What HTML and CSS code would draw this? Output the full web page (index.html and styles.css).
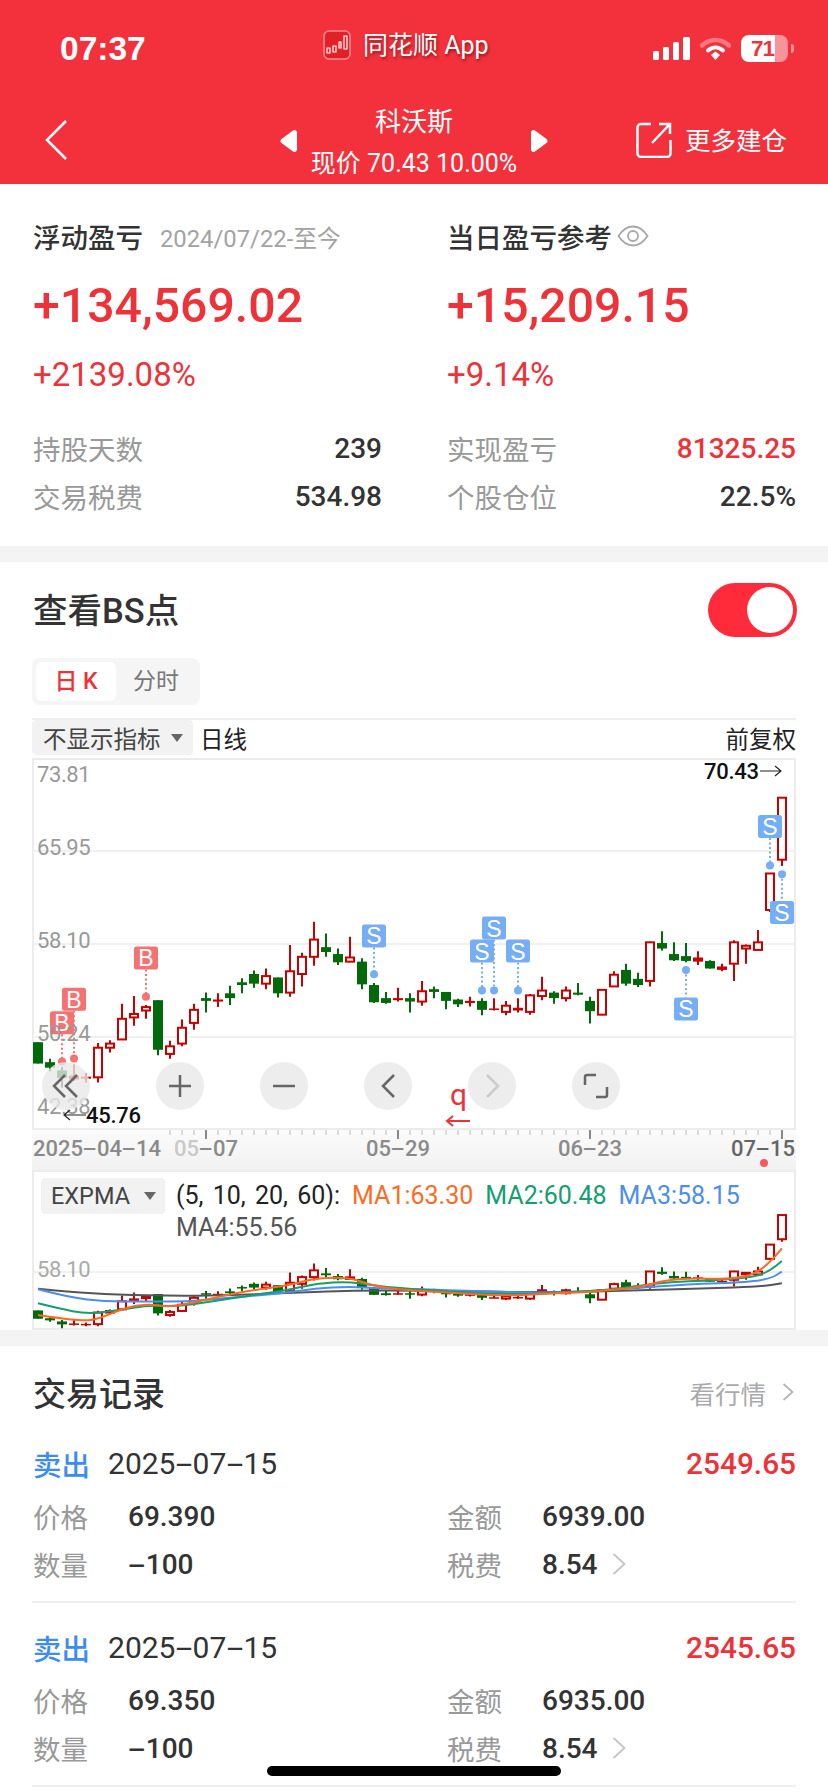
FILE: index.html
```html
<!DOCTYPE html>
<html lang="zh-CN">
<head>
<meta charset="utf-8">
<title>科沃斯 持仓详情</title>
<link rel="stylesheet" href="styles.css">
</head>
<body>
<div class="page">
  <header class="top">
    <div class="status">
      <span class="clock">07:37</span>
      <div class="app-tag">
        <svg class="app-logo" width="28" height="30" viewBox="0 0 28 30">
          <rect x="1" y="1" width="26" height="28" rx="5" fill="#e22028" stroke="#f78d90" stroke-width="1.5"/>
          <path d="M4 18h3v5H4zM10 16h3v6h-3zM16 12h2v6h-2zM21 6h3v13h-3z" fill="none" stroke="#fff" stroke-width="1.2"/>
        </svg>
        <span class="app-name">同花顺 App</span>
      </div>
      <div class="sys">
        <svg width="37" height="23" viewBox="0 0 37 23"><rect x="0" y="14" width="6" height="9" rx="1.5"/><rect x="10" y="10" width="6" height="13" rx="1.5"/><rect x="20" y="5" width="6" height="18" rx="1.5"/><rect x="30" y="0" width="7" height="23" rx="1.5"/></svg>
        <svg class="wifi" width="31" height="23" viewBox="0 0 31 23"><path d="M2 8.500C10 1 21 1 29 8.500" fill="none" stroke="#fff" stroke-opacity=".35" stroke-width="4.500" stroke-linecap="round"/><path d="M8 13.500c4.500-4 10.500-4 15 0" fill="none" stroke="#fff" stroke-width="4" stroke-linecap="round"/><path d="M11 18l4.500-3.500L20 18l-4.500 5z" fill="#fff"/></svg>
        <div class="battery"><span class="battery-fill">71</span><i class="battery-rest"></i><i class="battery-nub"></i></div>
      </div>
    </div>
    <nav class="nav">
      <svg class="back" width="22" height="40" viewBox="0 0 22 40"><path d="M21 1L2 20l19 19" fill="none" stroke="#fff" stroke-width="2.500"/></svg>
      <div class="stock">
        <svg width="17" height="24" viewBox="0 0 17 24"><path d="M13 1.500L1.500 10a2.500 2.500 0 0 0 0 4L13 22.500a2.500 2.500 0 0 0 4-2V3.500a2.500 2.500 0 0 0-4-2z" fill="#fff"/></svg>
        <div class="stock-text">
          <div class="stock-name">科沃斯</div>
          <div class="stock-price">现价 70.43 10.00%</div>
        </div>
        <svg width="17" height="24" viewBox="0 0 17 24"><path d="M4 1.500L15.500 10a2.500 2.500 0 0 1 0 4L4 22.500a2.500 2.500 0 0 1-4-2V3.500a2.500 2.500 0 0 1 4-2z" fill="#fff"/></svg>
      </div>
      <div class="more">
        <svg width="36" height="36" viewBox="0 0 36 36"><path d="M15 2H5a3.500 3.500 0 0 0-3.500 3.500v26A3.500 3.500 0 0 0 5 35h26a3.500 3.500 0 0 0 3.500-3.500V18" fill="none" stroke="#fff" stroke-width="2.500"/><path d="M16 21L33 3M23 2h11v10" fill="none" stroke="#fff" stroke-width="2.500"/></svg>
        <span class="more-text">更多建仓</span>
      </div>
    </nav>
  </header>

  <section class="summary">
    <div class="col">
      <div class="title-line"><span class="label-strong">浮动盈亏</span><span class="since">2024/07/22-至今</span></div>
      <div class="amount">+134,569.02</div>
      <div class="percent">+2139.08%</div>
      <div class="kv first"><span class="k">持股天数</span><span class="v">239</span></div>
      <div class="kv"><span class="k">交易税费</span><span class="v">534.98</span></div>
    </div>
    <div class="col">
      <div class="title-line"><span class="label-strong">当日盈亏参考</span>
        <svg class="eye" width="32" height="22" viewBox="0 0 32 22"><path d="M1.500 11C6 4 10 1.500 16 1.500S26 4 30.500 11C26 18 22 20.500 16 20.500S6 18 1.500 11z" fill="none" stroke="#a8a8a8" stroke-width="1.800"/><circle cx="16" cy="11" r="5" fill="none" stroke="#a8a8a8" stroke-width="1.800"/></svg>
      </div>
      <div class="amount">+15,209.15</div>
      <div class="percent">+9.14%</div>
      <div class="kv first"><span class="k">实现盈亏</span><span class="v up">81325.25</span></div>
      <div class="kv"><span class="k">个股仓位</span><span class="v">22.5%</span></div>
    </div>
  </section>

  <section class="bs">
    <div class="bs-head">
      <h2 class="bs-title">查看BS点</h2>
      <div class="toggle"><i class="knob"></i></div>
    </div>
    <div class="tabs"><span class="tab active">日 K</span><span class="tab">分时</span></div>
    <div class="chart-bar">
      <div class="picker"><span>不显示指标</span><i class="caret"></i></div>
      <span class="period">日线</span>
      <span class="adjust">前复权</span>
    </div>

    <div class="kline">
      <svg class="kline-svg" width="764" height="412" viewBox="32 758 764 412">
        <defs>
          <linearGradient id="axisFade" x1="0" y1="0" x2="0" y2="1">
            <stop offset="0" stop-color="#fbfbfb"/>
            <stop offset="1" stop-color="#f1f1f1"/>
          </linearGradient>
        </defs>
        <rect x="33" y="759" width="762" height="370" fill="#fff" stroke="#ececec" stroke-width="2"/>
        <path d="M33 851h762M33 944h762M33 1037h762" stroke="#f0f0f0" stroke-width="2"/>
        <rect x="32" y="1130" width="764" height="40" fill="url(#axisFade)"/>
        <g id="ticks"></g>
        <g id="candles"></g>
        <g id="marks"></g>
        <text class="price-label" x="37" y="782">73.81</text>
        <text class="price-label" x="37" y="855">65.95</text>
        <text class="price-label" x="37" y="948">58.10</text>
        <text class="price-label" x="37" y="1041">50.24</text>
        <text class="price-label" x="37" y="1114">42.38</text>
        <text class="extreme" x="704" y="779">70.43</text>
        <path class="thin-arrow" d="M760 771h20M775 766l6 5-6 5"/>
        <text class="extreme" x="86" y="1123">45.76</text>
        <path class="thin-arrow" d="M64 1115h22M70 1110l-6 5 6 5"/>
        <text class="cursor-q" x="450" y="1105">q</text>
        <path class="red-arrow" d="M447 1121h23M453 1116l-6 5 6 5"/>
        <circle cx="764" cy="1163" r="4" fill="#f65a5f"/>
      </svg>
      <div class="axis-text at-start">2025<span class="dash">-</span>04<span class="dash">-</span>14</div>
      <div class="axis-text at-may7"><span class="axis-faded">05</span><span class="dash">-</span>07</div>
      <div class="axis-text at-may29">05<span class="dash">-</span>29</div>
      <div class="axis-text at-jun23">06<span class="dash">-</span>23</div>
      <div class="axis-text at-jul15">07<span class="dash">-</span>15</div>
      <div class="zoom-bar">
        <button class="round rewind"><svg width="48" height="48" viewBox="0 0 48 48"><path d="M23 13L12 24l11 11M35 13L24 24l11 11" class="glyph"/></svg></button>
        <button class="round"><svg width="48" height="48" viewBox="0 0 48 48"><path d="M13 24h22M24 13v22" class="glyph"/></svg></button>
        <button class="round"><svg width="48" height="48" viewBox="0 0 48 48"><path d="M13 24h22" class="glyph"/></svg></button>
        <button class="round"><svg width="48" height="48" viewBox="0 0 48 48"><path d="M30 13L19 24l11 11" class="glyph"/></svg></button>
        <button class="round"><svg width="48" height="48" viewBox="0 0 48 48"><path d="M19 13l11 11-11 11" class="glyph off"/></svg></button>
        <button class="round"><svg width="48" height="48" viewBox="0 0 48 48"><path d="M13 23v-8a2 2 0 0 1 2-2h9M35 25v8a2 2 0 0 1-2 2h-9" class="glyph"/></svg></button>
      </div>
    </div>

    <div class="expma">
      <svg class="expma-svg" width="764" height="160" viewBox="32 1170 764 160">
        <rect x="33" y="1171" width="762" height="158" fill="#fff" stroke="#ececec" stroke-width="2"/>
        <path d="M33 1272h762" stroke="#f0f0f0" stroke-width="2"/>
        <g id="miniCandles"></g>
        <g id="averages"></g>
        <text class="mini-label" x="37" y="1277">58.10</text>
      </svg>
      <div class="expma-legend">
        <div class="picker small"><span>EXPMA</span><i class="caret"></i></div>
        <div class="legend-text">
          <span class="ma-params">(5, 10, 20, 60):</span><span class="ma1">MA1:63.30</span><span class="ma2">MA2:60.48</span><span class="ma3">MA3:58.15</span><span class="ma4">MA4:55.56</span>
        </div>
      </div>
    </div>
  </section>

  <section class="records">
    <div class="records-head">
      <h2 class="records-title">交易记录</h2>
      <div class="quote"><span>看行情</span><svg width="12" height="18" viewBox="0 0 12 18"><path d="M1.500 1l9 8-9 8" fill="none" stroke="#b5b5b5" stroke-width="1.800"/></svg></div>
    </div>

    <article class="record">
      <div class="record-top"><span class="side">卖出</span><span class="date">2025<span class="dash">-</span>07<span class="dash">-</span>15</span><span class="gain">2549.65</span></div>
      <div class="record-grid">
        <div class="cell"><span class="cell-k">价格</span><span class="cell-v">69.390</span></div>
        <div class="cell"><span class="cell-k">金额</span><span class="cell-v">6939.00</span></div>
        <div class="cell"><span class="cell-k">数量</span><span class="cell-v"><span class="dash">-</span>100</span></div>
        <div class="cell"><span class="cell-k">税费</span><span class="cell-v">8.54</span><svg class="cell-more" width="14" height="22" viewBox="0 0 14 22"><path d="M1.500 1l11 10-11 10" fill="none" stroke="#c4c4c4" stroke-width="1.800"/></svg></div>
      </div>
    </article>

    <article class="record">
      <div class="record-top"><span class="side">卖出</span><span class="date">2025<span class="dash">-</span>07<span class="dash">-</span>15</span><span class="gain">2545.65</span></div>
      <div class="record-grid">
        <div class="cell"><span class="cell-k">价格</span><span class="cell-v">69.350</span></div>
        <div class="cell"><span class="cell-k">金额</span><span class="cell-v">6935.00</span></div>
        <div class="cell"><span class="cell-k">数量</span><span class="cell-v"><span class="dash">-</span>100</span></div>
        <div class="cell"><span class="cell-k">税费</span><span class="cell-v">8.54</span><svg class="cell-more" width="14" height="22" viewBox="0 0 14 22"><path d="M1.500 1l11 10-11 10" fill="none" stroke="#c4c4c4" stroke-width="1.800"/></svg></div>
      </div>
    </article>
  </section>

  <div class="home-bar"></div>
</div>
<script src="chart.js"></script>
</body>
</html>
```
FILE: styles.css
```css
* { box-sizing: border-box; }

html, body {
  margin: 0;
  padding: 0;
  background: #fff;
}

body {
  font-family: Roboto, "Noto Sans CJK SC", sans-serif;
  color: #333;
}

.page {
  position: relative;
  width: 828px;
  height: 1792px;
  overflow: hidden;
  background: #f4f4f4;
}

/* The trading font draws a long dash between digits */
.dash {
  display: inline-block;
  margin: 0 .147em;
  transform: scaleX(2);
}

/* Red header */
.top {
  height: 184px;
  background: #f3313c;
  color: #fff;
}

.status {
  position: relative;
  display: flex;
  align-items: center;
  justify-content: space-between;
  height: 92px;
  padding: 5px 40px 0 60px;
}

.clock {
  font-family: "Liberation Sans", sans-serif;
  font-size: 33.500px;
  font-weight: 700;
}

.app-tag {
  position: absolute;
  top: 28px;
  left: 323px;
  display: flex;
  align-items: center;
  gap: 12px;
}

.app-name {
  margin-top: -3px;
  font-size: 25px;
  text-shadow: 1px 2px 3px rgba(60, 0, 0, .55);
}

.sys {
  display: flex;
  align-items: center;
  gap: 10px;
  fill: #fff;
}

.battery {
  position: relative;
  display: flex;
  width: 47px;
  height: 27px;
}

.battery-fill {
  width: 34px;
  height: 27px;
  padding-left: 10px;
  border-radius: 8px 0 0 8px;
  background: #fff;
  color: #f3313c;
  font-family: "Liberation Sans", sans-serif;
  font-size: 22.500px;
  font-weight: 700;
  line-height: 27px;
  letter-spacing: -1px;
}

.battery-rest {
  width: 13px;
  height: 27px;
  border-radius: 0 8px 8px 0;
  background: rgba(255, 255, 255, .48);
}

.battery-nub {
  position: absolute;
  top: 9px;
  right: -6px;
  width: 3px;
  height: 9px;
  border-radius: 0 3px 3px 0;
  background: rgba(255, 255, 255, .48);
}

.nav {
  position: relative;
  display: flex;
  align-items: center;
  justify-content: space-between;
  height: 92px;
  padding: 0 41px 0 45px;
}

.back { margin-top: 4px; }

.stock {
  position: absolute;
  left: 280px;
  top: 0;
  display: flex;
  align-items: center;
  justify-content: space-between;
  width: 268px;
  height: 92px;
}

.stock svg { margin-top: 5px; }

.stock-text {
  text-align: center;
  width: 220px;
}

.stock-name {
  margin-top: 9px;
  font-size: 26px;
  line-height: 32px;
}

.stock-price {
  margin-top: 11px;
  font-size: 25px;
  line-height: 30px;
  white-space: nowrap;
}

.more {
  display: flex;
  align-items: center;
  gap: 13px;
  font-size: 25.500px;
  margin-top: 4px;
}

.more-text { margin-top: -4px; }

/* Profit summary */
.summary {
  display: grid;
  grid-template-columns: 349px 349px;
  column-gap: 65px;
  height: 362px;
  margin-bottom: 16px;
  padding: 32px 32px 0 33px;
  background: #fff;
}

.title-line {
  display: flex;
  align-items: center;
  height: 40px;
}

.label-strong {
  font-size: 27.500px;
  font-weight: 500;
  color: #333;
  white-space: nowrap;
}

.since {
  margin-left: 17px;
  font-size: 23.800px;
  color: #a3a3a3;
  white-space: nowrap;
}

.eye { margin-left: 5px; }

.amount {
  margin-top: 20px;
  font-size: 48.200px;
  font-weight: 500;
  line-height: 60px;
  color: #ee3239;
}

.percent {
  margin-top: 19px;
  font-size: 33px;
  line-height: 40px;
  color: #ee3239;
}

.kv {
  display: flex;
  align-items: center;
  justify-content: space-between;
  height: 48px;
}

.kv.first { margin-top: 29px; }

.k {
  font-size: 27.500px;
  color: #999;
}

.v {
  font-size: 28px;
  font-weight: 500;
  color: #333;
}

.v.up { color: #ee3239; }

/* BS point chart */
.bs {
  height: 768px;
  margin-bottom: 16px;
  padding: 0 32px;
  background: #fff;
}

.bs-head {
  display: flex;
  align-items: center;
  justify-content: space-between;
  height: 96px;
}

.bs-title {
  margin: 0 0 4px;
  padding-left: 1px;
  font-size: 34.500px;
  font-weight: 500;
  color: #333;
}

.toggle {
  display: flex;
  justify-content: flex-end;
  align-items: center;
  width: 89px;
  height: 54px;
  margin-right: -1px;
  padding-right: 4px;
  border-radius: 27px;
  background: #ff2a3a;
}

.knob {
  width: 46px;
  height: 46px;
  border-radius: 50%;
  background: #fff;
}

.tabs {
  display: flex;
  align-items: center;
  width: 168px;
  height: 47px;
  padding: 4px;
  border-radius: 8px;
  background: #f5f5f5;
}

.tab {
  flex: 1;
  height: 39px;
  font-size: 23px;
  line-height: 39px;
  text-align: center;
  color: #777;
}

.tab.active {
  flex: 0 0 80px;
  border-radius: 6px;
  background: #fff;
  color: #ee3239;
  font-weight: 500;
}

.chart-bar {
  display: flex;
  align-items: center;
  height: 37px;
  margin-top: 13px;
  margin-bottom: 3px;
  border-top: 2px solid #eee;
}

.picker {
  display: flex;
  align-items: center;
  justify-content: space-between;
  width: 161px;
  height: 35px;
  padding: 0 10px 0 11px;
  border-radius: 4px;
  background: #f2f2f2;
  font-size: 23.500px;
  color: #444;
}

.caret {
  width: 0;
  height: 0;
  border-left: 6px solid transparent;
  border-right: 6px solid transparent;
  border-top: 8px solid #666;
}

.period {
  margin-left: 7px;
  font-size: 23.500px;
  color: #222;
}

.adjust {
  margin-left: auto;
  font-size: 23.500px;
  color: #222;
}

.kline {
  position: relative;
  height: 412px;
}

.kline-svg,
.expma-svg { display: block; }

.price-label {
  font-family: Roboto, sans-serif;
  font-size: 22px;
  letter-spacing: -.4px;
  fill: #999;
}

.extreme {
  font-family: Roboto, sans-serif;
  font-size: 22px;
  font-weight: 500;
  letter-spacing: -.3px;
  fill: #111;
}

.thin-arrow {
  fill: none;
  stroke: #222;
  stroke-width: 1.200;
}

.red-arrow {
  fill: none;
  stroke: #ee3239;
  stroke-width: 2;
}

.cursor-q {
  font-family: Roboto, sans-serif;
  font-size: 30px;
  fill: #ee3239;
}

.axis-text {
  position: absolute;
  top: 378px;
  font-size: 22px;
  font-weight: 500;
  line-height: 26px;
  color: #8a8a8a;
  white-space: nowrap;
}

.at-start { left: 1px; }
.at-may7 { left: 142px; }
.at-may29 { left: 334px; }
.at-jun23 { left: 526px; }
.at-jul15 { right: 1px; color: #666; }

.axis-faded { color: #c9c9c9; }

.tag-text {
  font-family: "Liberation Sans", sans-serif;
  font-size: 23px;
  text-anchor: middle;
  fill: #fff;
}

.zoom-bar {
  position: absolute;
  top: 304px;
  left: 10px;
  display: flex;
  gap: 56px;
}

.round {
  width: 48px;
  height: 48px;
  padding: 0;
  border: 0;
  border-radius: 50%;
  background: rgba(232, 232, 232, .78);
}

.round.rewind { margin-right: 10px; }

.round svg { display: block; }

.glyph {
  fill: none;
  stroke: #666;
  stroke-width: 2.500;
}

.glyph.off { stroke: #ccc; }

/* EXPMA panel */
.expma {
  position: relative;
  height: 160px;
}

.mini-label {
  font-family: Roboto, sans-serif;
  font-size: 22px;
  letter-spacing: -.4px;
  fill: #aaa;
}

.expma-legend {
  position: absolute;
  top: 8px;
  left: 9px;
  display: flex;
  gap: 11px;
}

.picker.small {
  width: 124px;
  height: 36px;
  padding: 0 9px 0 10px;
  font-size: 23.500px;
}

.legend-text {
  display: flex;
  flex-wrap: wrap;
  width: 590px;
  column-gap: 12px;
  padding-top: 2px;
  font-size: 25px;
  line-height: 32px;
  white-space: nowrap;
}

.ma-params { color: #222; word-spacing: 3px; }
.ma1 { color: #ff6a1f; }
.ma2 { color: #12a070; }
.ma3 { color: #4c8df0; }
.ma4 { color: #555; flex-basis: 100%; }

/* Trade records */
.records {
  height: 446px;
  padding: 26px 32px 0;
  background: #fff;
}

.records-head {
  display: flex;
  align-items: center;
  justify-content: space-between;
  height: 40px;
  margin-bottom: 2px;
}

.records-title {
  margin: 0;
  padding-left: 1px;
  font-size: 33px;
  font-weight: 500;
  color: #333;
}

.quote {
  display: flex;
  align-items: center;
  gap: 16px;
  padding-right: 2px;
  font-size: 25.500px;
  color: #aaa;
}

.record {
  padding: 24px 0 13px 1px;
  border-bottom: 2px solid #f0f0f0;
}

.records-head + .record { padding-top: 29px; }

.record-top {
  display: flex;
  align-items: center;
  height: 40px;
}

.side {
  font-size: 28.500px;
  font-weight: 500;
  color: #3d8cf0;
}

.date {
  margin-left: 18px;
  font-size: 30px;
  color: #333;
}

.gain {
  margin-left: auto;
  font-size: 29.800px;
  font-weight: 500;
  color: #ee3239;
}

.record-grid {
  display: grid;
  grid-template-columns: 414px 1fr;
  margin-top: 9px;
}

.cell {
  display: flex;
  align-items: center;
  height: 48px;
}

.cell-k {
  width: 95px;
  font-size: 27.500px;
  color: #999;
}

.cell-v {
  font-size: 28px;
  font-weight: 500;
  color: #333;
}

.cell-more { margin-left: 14px; }

.home-bar {
  position: absolute;
  left: 267px;
  top: 1766px;
  width: 294px;
  height: 10px;
  border-radius: 5px;
  background: #000;
}
```
FILE: chart.js
```js
// Daily candles for the position chart.
// Each row: wick top, wick bottom, body top, body bottom, kind
// kind: u = rising (hollow), r = small rising (solid), d = falling (solid)
const CANDLES = [
  [1168,1230,1168,1230,'d'],[1216,1252,1226,1242,'d'],[1240,1300,1250,1272,'d'],[1232,1280,1265,1276,'r'],
  [1258,1286,1268,1274,'r'],[1170,1285,1184,1270,'u'],[1162,1198,1172,1184,'u'],[1056,1160,1100,1160,'u'],
  [1034,1120,1086,1096,'u'],[1060,1100,1066,1076,'u'],[1046,1206,1046,1190,'d'],[1164,1216,1180,1202,'u'],
  [1102,1180,1126,1172,'u'],[1056,1132,1074,1112,'u'],[1024,1082,1040,1048,'d'],[1026,1066,1044,1050,'r'],
  [1004,1060,1026,1040,'d'],[982,1026,994,1002,'d'],[960,1010,970,998,'d'],[954,1014,976,998,'u'],
  [980,1038,980,1026,'d'],[886,1036,962,1024,'u'],[908,1006,920,970,'u'],[818,946,870,920,'u'],
  [852,920,892,906,'d'],[896,944,912,936,'d'],[862,936,922,934,'u'],[924,1014,934,1000,'d'],
  [996,1054,1002,1052,'d'],[1022,1056,1040,1054,'d'],[1010,1050,1040,1046,'r'],[1026,1082,1040,1050,'d'],
  [990,1062,1020,1050,'u'],[1006,1040,1014,1022,'d'],[1022,1072,1022,1048,'d'],[1042,1066,1044,1058,'d'],
  [1036,1064,1048,1054,'r'],[1040,1090,1048,1074,'d'],[1040,1076,1070,1074,'r'],[1048,1090,1062,1080,'u'],
  [1040,1082,1068,1076,'r'],[1028,1088,1032,1080,'u'],[978,1046,1018,1034,'u'],[1020,1056,1024,1040,'d'],
  [1006,1050,1018,1040,'u'],[996,1032,1024,1030,'d'],[1036,1114,1048,1078,'d'],[1016,1090,1016,1088,'u'],
  [962,1006,972,1006,'u'],[940,1004,958,998,'d'],[966,1008,984,1002,'d'],[876,1006,878,990,'u'],
  [846,902,880,896,'d'],[878,932,912,930,'d'],[880,936,918,932,'d'],[904,944,922,934,'r'],
  [930,954,932,954,'d'],[940,962,948,958,'r'],[872,990,878,940,'u'],[884,940,888,896,'u'],
  [842,900,878,900,'u'],[678,790,678,784,'u'],[458,656,458,638,'u']
];

// Buy and sell tags: candle x, tag top, dot position (chart units), label
const MARKS = [
  [62,1078,1224,'B'],[74,1010,1215,'B'],[146,890,1036,'B'],
  [374,826,971,'S'],[482,870,1018,'S'],[494,803,1018,'S'],[518,870,1018,'S'],
  [686,1038,958,'S'],[770,508,655,'S'],[782,758,680,'S']
];

const AVERAGES = [
  ['#555', [[72,386],[130,396],[220,404],[340,408],[450,405],[560,398],[680,391],[800,392],[950,396],[1100,396],[1220,390],[1340,385],[1440,380],[1481,370]]],
  ['#4c8df0', [[72,388],[130,412],[200,425],[280,424],[350,425],[420,415],[520,402],[600,385],[660,380],[720,385],[800,388],[900,393],[1000,398],[1100,395],[1200,385],[1300,373],[1420,366],[1460,355],[1481,335]]],
  ['#12a070', [[72,430],[110,445],[165,462],[220,452],[280,436],[330,440],[400,425],[480,405],[540,392],[600,370],[660,365],[700,375],[760,385],[850,395],[980,404],[1050,398],[1140,392],[1210,378],[1270,365],[1340,362],[1430,352],[1460,330],[1481,303]]],
  ['#ff6a1f', [[72,465],[110,474],[160,483],[190,475],[230,447],[275,431],[320,440],[360,430],[420,408],[480,390],[540,378],[590,358],[630,352],[670,356],[700,375],[760,390],[850,398],[950,408],[1050,400],[1120,396],[1150,390],[1210,382],[1260,360],[1320,354],[1370,358],[1420,348],[1445,325],[1465,295],[1481,265]]]
];

const RED = '#c80000';
const GREEN = '#006a0a';
const NS = 'http://www.w3.org/2000/svg';

const candleX = i => 38 + 12 * i;
const mainY = z => 640 + z / 2.904;
const miniY = z => 1272 + (mainY(z) - 943.7) * 0.39;

function add(parent, tag, attrs, text) {
  const el = document.createElementNS(NS, tag);
  for (const key in attrs) el.setAttribute(key, attrs[key]);
  if (text) el.textContent = text;
  parent.appendChild(el);
  return el;
}

function drawCandles(group, toY, strokeWidth) {
  CANDLES.forEach(([wickTop, wickBottom, bodyTop, bodyBottom, kind], i) => {
    const x = candleX(i);
    const color = kind === 'd' ? GREEN : RED;
    add(group, 'line', { x1: x, x2: x, y1: toY(wickTop), y2: toY(wickBottom), stroke: color, 'stroke-width': 2 });
    const top = toY(bodyTop);
    const height = Math.max(toY(bodyBottom) - top, 1.5);
    if (kind === 'u') {
      add(group, 'rect', { x: x - 4, y: top, width: 8, height, fill: '#fff', stroke: color, 'stroke-width': strokeWidth });
    } else {
      add(group, 'rect', { x: x - 5, y: top, width: 10, height, fill: color });
    }
  });
}

function drawMarks(group) {
  MARKS.forEach(([x, tagTop, dot, label]) => {
    const color = label === 'B' ? '#f47272' : '#75aef5';
    const top = mainY(tagTop);
    const dotY = mainY(dot);
    const below = top > dotY;
    add(group, 'line', {
      x1: x, x2: x, y1: below ? dotY : top + 23, y2: below ? top : dotY,
      stroke: color, 'stroke-width': 2, 'stroke-dasharray': '2 2.5'
    });
    add(group, 'circle', { cx: x, cy: dotY, r: 4, fill: color });
    add(group, 'rect', { x: x - 12, y: top, width: 24, height: 23, rx: 2.5, fill: color });
    add(group, 'text', { x, y: top + 20, class: 'tag-text' }, label);
  });
}

function drawTicks(group) {
  for (let i = 11; i <= 62; i++) {
    const x = candleX(i);
    const long = i === 14 || i === 30 || i === 46 || i === 62;
    add(group, 'line', {
      x1: x, x2: x, y1: 1130, y2: long ? 1139 : 1135,
      stroke: long ? '#888' : '#bbb', 'stroke-width': long ? 2 : 1
    });
  }
}

// Smooth line through the points, using segment midpoints as joins
function smoothPath(points) {
  const pts = points.map(([x, z]) => [x / 1.894, 1160 + z / 3]);
  let d = `M${pts[0][0].toFixed(1)} ${pts[0][1].toFixed(1)}`;
  for (let i = 1; i < pts.length - 1; i++) {
    const mx = (pts[i][0] + pts[i + 1][0]) / 2;
    const my = (pts[i][1] + pts[i + 1][1]) / 2;
    d += `Q${pts[i][0].toFixed(1)} ${pts[i][1].toFixed(1)} ${mx.toFixed(1)} ${my.toFixed(1)}`;
  }
  const last = pts[pts.length - 1];
  return d + `L${last[0].toFixed(1)} ${last[1].toFixed(1)}`;
}

drawTicks(document.getElementById('ticks'));
drawCandles(document.getElementById('candles'), mainY, 2);
drawMarks(document.getElementById('marks'));
drawCandles(document.getElementById('miniCandles'), miniY, 2);

const averages = document.getElementById('averages');
AVERAGES.forEach(([color, points]) => {
  add(averages, 'path', { d: smoothPath(points), fill: 'none', stroke: color, 'stroke-width': 2 });
});
```
